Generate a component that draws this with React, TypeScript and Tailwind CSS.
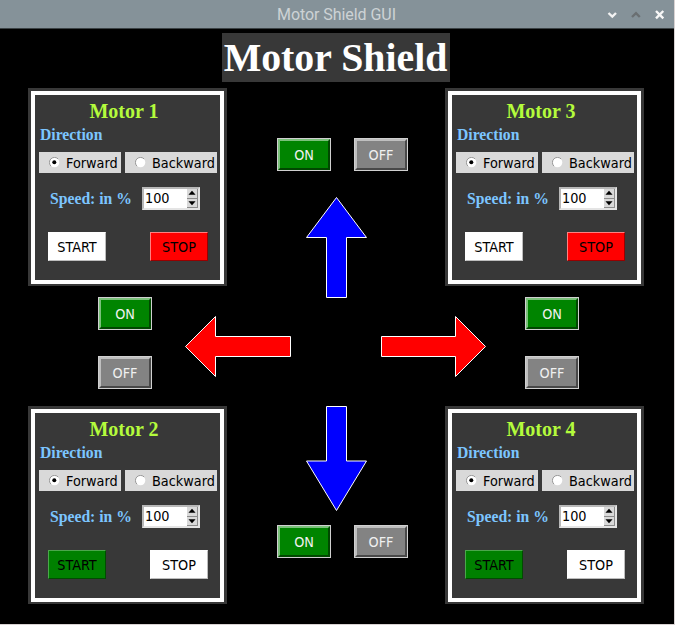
import React from "react";

const serif = "font-['Liberation_Serif','Times_New_Roman',serif] font-bold";
const sans = "font-['DejaVu_Sans_Condensed','DejaVu_Sans',sans-serif] [font-stretch:condensed] text-[14.3px] leading-[18px]";

function Toggle({ on }: { on?: boolean }) {
  return (
    <button
      className={`${sans} flex h-[33px] w-[54px] shrink-0 border border-[#d0d0d0] ${on ? "bg-[#008400]" : "bg-[#838383]"}`}
    >
      <span
        className={`flex h-full w-full items-center justify-center border-2 text-[#f0f0f0] ${
          on
            ? "border-t-[#7ac07a] border-r-[#004700] border-b-[#004700] border-l-[#7ac07a]"
            : "border-t-[#bfbfbf] border-r-[#484848] border-b-[#484848] border-l-[#bfbfbf]"
        }`}
      >
        {on ? "ON" : "OFF"}
      </span>
    </button>
  );
}

function Radio({ label, checked, width }: { label: string; checked?: boolean; width: string }) {
  return (
    <label className={`${sans} flex h-[21px] items-center bg-[#d9d9d9] pl-[10px] text-black ${width}`}>
      <svg width="11" height="11" viewBox="0 0 11 11" className="mr-[6px] shrink-0">
        <circle cx="5.5" cy="5.5" r="4.8" fill="#fff" />
        <path d="M1.9 9.1A5 5 0 0 1 9.1 1.9" fill="none" stroke="#999" strokeWidth="1" />
        {checked && <circle cx="5.3" cy="5.3" r="2" fill="#000" />}
      </svg>
      <span>{label}</span>
    </label>
  );
}

function Action({ label, tone }: { label: string; tone: "white" | "red" | "green" }) {
  const tones = {
    white: "bg-white border-t-white border-l-white border-r-[#bdbdbd] border-b-[#bdbdbd]",
    red: "bg-[#ff0000] border-t-[#ff8080] border-l-[#ff8080] border-r-[#990000] border-b-[#990000]",
    green: "bg-[#008000] border-t-[#4ca64c] border-l-[#4ca64c] border-r-[#004c00] border-b-[#004c00]",
  };
  return (
    <button className={`${sans} flex h-[29px] w-[58px] items-center justify-center border text-black ${tones[tone]}`}>
      {label}
    </button>
  );
}

function Spin() {
  return (
    <div className="flex h-[23px] w-[58px] border-2 border-t-[#b8b8b8] border-r-[#e4e4e4] border-b-[#e4e4e4] border-l-[#b8b8b8] bg-white">
      <span className={`${sans} flex-1 pl-px text-black`}>100</span>
      <div className="flex w-[11px] flex-col">
        {["M5.5 2L9.5 6.5H1.5Z", "M5.5 7L9.5 2.5H1.5Z"].map((d) => (
          <svg key={d} width="11" height="9.5" viewBox="0 0 11 9.5" className="border-r border-b border-[#8c8c8c] bg-[#d9d9d9]">
            <path d={d} fill="#000" />
          </svg>
        ))}
      </div>
    </div>
  );
}

function Panel({ n, running }: { n: number; running?: boolean }) {
  return (
    <section className="h-[198px] w-[199px] shrink-0 bg-[#383838] px-[3px] pt-[3px] pb-[2px]">
      <div className="h-full border-4 border-white pt-[4px]">
        <h2 className={`${serif} pr-[7px] text-center text-[20px] leading-[24px] text-[#b4fb3c]`}>Motor {n}</h2>
        <p className={`${serif} pt-px pl-[5px] text-[15.7px] leading-[22px] text-[#7cc5ff]`}>Direction</p>
        <div className="mt-[6px] flex gap-[4px] pl-[4px]">
          <Radio label="Forward" checked width="w-[82px]" />
          <Radio label="Backward" width="w-[92px]" />
        </div>
        <div className="mt-[14px] flex items-center pl-[15px]">
          <span className={`${serif} w-[92px] text-[15.7px] leading-[22px] whitespace-nowrap text-[#7cc5ff]`}>Speed: in %</span>
          <Spin />
        </div>
        <div className="mt-[22px] flex gap-[44px] pl-[13px]">
          <Action label="START" tone={running ? "green" : "white"} />
          <Action label="STOP" tone={running ? "white" : "red"} />
        </div>
      </div>
    </section>
  );
}

function Arrow({ w, h, points, fill }: { w: number; h: number; points: string; fill: string }) {
  return (
    <svg width={w} height={h} viewBox={`0 0 ${w} ${h}`} className="block shrink-0">
      <polygon points={points} fill={fill} stroke="#fff" strokeWidth="1" />
    </svg>
  );
}

function Side({ top, bottom }: { top: number; bottom: number }) {
  return (
    <div className="flex w-[199px] shrink-0 flex-col">
      <Panel n={top} />
      <div className={`flex h-[120px] flex-col gap-[26px] pt-[11px] ${top === 1 ? "pl-[70px]" : "pl-[80px]"}`}>
        <Toggle on />
        <Toggle />
      </div>
      <Panel n={bottom} running />
    </div>
  );
}

export default function App() {
  return (
    <div className="h-[625px] w-[675px] overflow-hidden border-r border-b border-[#d8d2d2] bg-black">
      <header className="flex h-[29px] items-center border-b border-[#3b4245] bg-[#859299]">
        <span className="mt-[2px] ml-[277px] flex-1 font-['Roboto',sans-serif] text-[16px] font-normal tracking-[-0.06px] whitespace-nowrap text-[#cdd2d5]">
          Motor Shield GUI
        </span>
        <svg width="60" height="12" viewBox="0 0 60 12" className="mr-[8px] mt-px" fill="none" strokeWidth="2.4">
          <path d="M2.5 4L6.3 7.6L10 4" stroke="#f2f2f2" />
          <path d="M26 8L30 4.2L33.8 8" stroke="#6a6f72" />
          <path d="M50 2L57.3 9.3M57.3 2L50 9.3" stroke="#f7f7f7" />
        </svg>
      </header>
      <h1 className={`${serif} mt-[4px] ml-[222px] h-[49px] w-[228px] bg-[#383838] pr-px text-center text-[39.8px] leading-[50px] whitespace-nowrap text-white`}>
        Motor Shield
      </h1>
      <main className="mt-[6px] flex pl-[28px]">
        <Side top={1} bottom={2} />
        <div className="flex w-[218px] shrink-0 flex-col">
          <div className="mt-[50px] flex gap-[23px] pl-[50px]">
            <Toggle on />
            <Toggle />
          </div>
          <div className="mt-[26px] pl-[79px]">
            <Arrow w={61} h={101} fill="#0000ff" points="30.5,.5 60.5,40.5 40.5,40.5 40.5,100.5 20.5,100.5 20.5,40.5 .5,40.5" />
          </div>
          <div className="mt-[18px] -mr-[42px] -ml-[42px] flex gap-[90px]">
            <Arrow w={106} h={61} fill="#ff0000" points=".5,30.5 30.5,.5 30.5,20.5 105.5,20.5 105.5,40.5 30.5,40.5 30.5,60.5" />
            <Arrow w={106} h={61} fill="#ff0000" points="104.5,30.5 74.5,.5 74.5,20.5 .5,20.5 .5,40.5 74.5,40.5 74.5,60.5" />
          </div>
          <div className="mt-[29px] pl-[79px]">
            <Arrow w={61} h={106} fill="#0000ff" points="20.5,.5 40.5,.5 40.5,55 60.5,55 30.5,104.5 .5,55 20.5,55" />
          </div>
          <div className="mt-[13px] flex gap-[23px] pl-[50px]">
            <Toggle on />
            <Toggle />
          </div>
        </div>
        <Side top={3} bottom={4} />
      </main>
    </div>
  );
}
